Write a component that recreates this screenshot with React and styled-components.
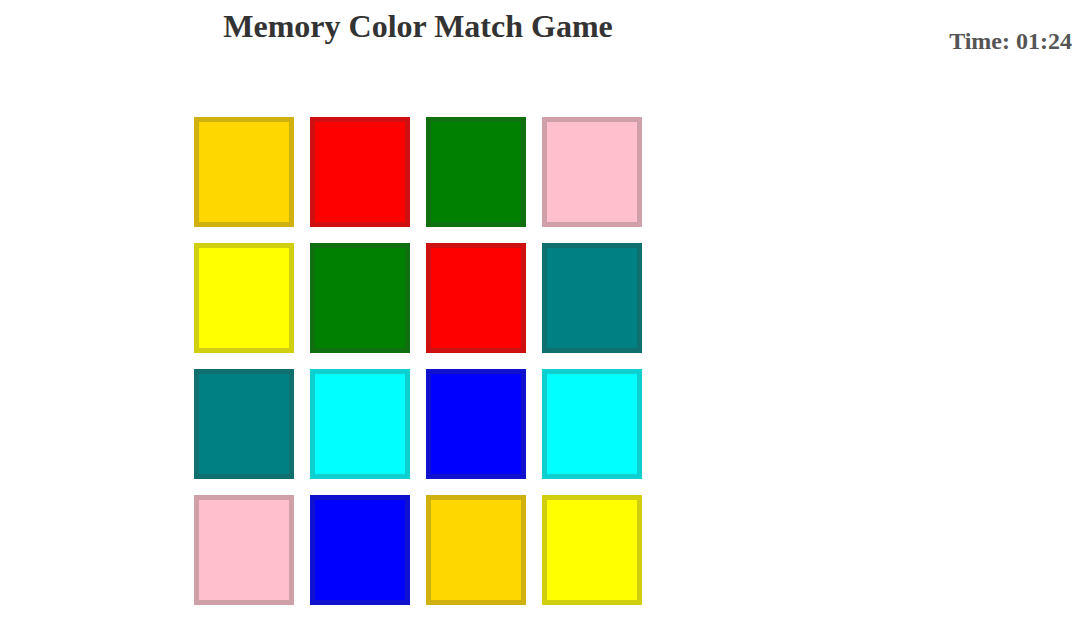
import React from "react";
import styled, { createGlobalStyle } from "styled-components";

const Global = createGlobalStyle`
  html, body { margin: 0; padding: 0; background: #fff; }
  body { font-family: "Liberation Serif", "Times New Roman", serif; }
`;

const Page = styled.div`
  display: flex;
  justify-content: space-between;
  align-items: flex-start;
  padding: 8px 15px 0 194px;
`;

const Board = styled.main`
  display: flex;
  flex-direction: column;
  align-items: center;
  width: 448px;
`;

const Title = styled.h1`
  margin: 0;
  font-size: 32px;
  font-weight: bold;
  color: #333;
  white-space: nowrap;
`;

const Grid = styled.div`
  margin-top: 72px;
  display: grid;
  grid-template-columns: repeat(4, 100px);
  grid-auto-rows: 110px;
  gap: 16px;
`;

const Tile = styled.button`
  box-sizing: border-box;
  width: 100px;
  height: 110px;
  padding: 0;
  margin: 0;
  border: 5px solid rgba(64, 64, 64, 0.25);
  background-color: ${(p) => p.$color};
  cursor: pointer;
`;

const Timer = styled.div`
  margin-top: 20px;
  font-size: 24px;
  font-weight: bold;
  color: #555;
  white-space: nowrap;
`;

const tiles = [
  "#FFD700", "#FF0000", "#008000", "#FFC0CB",
  "#FFFF00", "#008000", "#FF0000", "#008080",
  "#008080", "#00FFFF", "#0000FF", "#00FFFF",
  "#FFC0CB", "#0000FF", "#FFD700", "#FFFF00",
];

export default function App() {
  return (
    <>
      <Global />
      <Page>
        <Board>
          <Title>Memory Color Match Game</Title>
          <Grid>
            {tiles.map((c, i) => (
              <Tile key={i} $color={c} aria-label={`tile ${i + 1}`} />
            ))}
          </Grid>
        </Board>
        <Timer>Time: 01:24</Timer>
      </Page>
    </>
  );
}
